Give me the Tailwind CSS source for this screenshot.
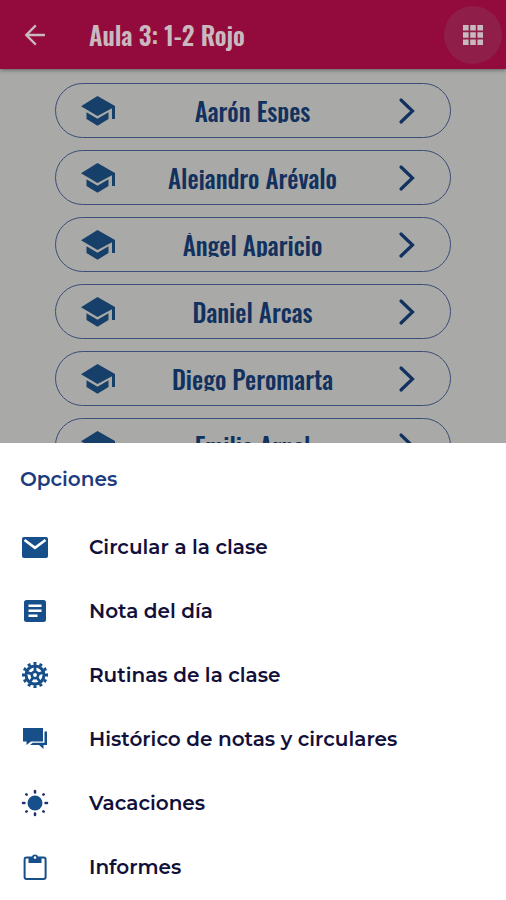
<!DOCTYPE html>
<html lang="es">
<head>
<meta charset="utf-8">
<meta name="viewport" content="width=device-width, initial-scale=1">
<title>Aula 3: 1-2 Rojo</title>
<script src="https://cdn.jsdelivr.net/npm/@tailwindcss/browser@4"></script>
</head>
<body class="bg-[#a9aaa7]">
<svg class="hidden" aria-hidden="true">
  <symbol id="cap" viewBox="0 0 34 30"><path fill="currentColor" d="M16.500 0 34 10v13h-3V12.200L16.500 20 0 10.200zM5.500 16.300l11 6.500 11-6.500V23l-11 6.700L5.500 23z"/></symbol>
  <symbol id="chevron" viewBox="0 0 18 28"><path fill="none" stroke="currentColor" stroke-width="3.200" stroke-linecap="round" stroke-linejoin="miter" d="M3 3 14.500 14 3 25"/></symbol>
</svg>
<div class="relative h-screen overflow-hidden font-['Oswald','Liberation_Sans_Narrow','Liberation_Sans',sans-serif]">
  <header class="flex h-[69px] items-center bg-[#930b3c] pr-1 pl-[21px] text-[#c9b9bf] shadow-[0_1px_4px_rgba(0,0,0,0.45)]">
    <button type="button" aria-label="Volver" class="flex size-7 items-center justify-center">
      <svg viewBox="0 0 24 24" class="size-7"><path fill="none" stroke="currentColor" stroke-width="2" d="M20.500 12H5M12.700 3.800 4.500 12l8.200 8.200"/></svg>
    </button>
    <h1 class="ml-10 flex-1 text-[25px] leading-9 font-semibold">Aula 3: 1-2 Rojo</h1>
    <button type="button" aria-label="Opciones" class="flex size-[58px] items-center justify-center rounded-full bg-[#8f1e48]">
      <svg viewBox="0 0 20 20" class="size-5" fill="currentColor"><path d="M0 0h5.600v5.600H0zM7.200 0h5.600v5.600H7.200zM14.400 0H20v5.600h-5.600zM0 7.200h5.600v5.600H0zM7.200 7.200h5.600v5.600H7.200zM14.400 7.200H20v5.600h-5.600zM0 14.400h5.600V20H0zM7.200 14.400h5.600V20H7.200zM14.400 14.400H20V20h-5.600z"/></svg>
    </button>
  </header>
  <main class="flex flex-col gap-3 px-[55px] pt-[14px] text-[#12315f]">
    <button type="button" class="flex h-[55px] items-center rounded-full border border-[#3c4d77] pr-[34px] pl-[25px]"><svg class="h-[30px] w-[34px] text-[#163f69]"><use href="#cap"/></svg><span class="h-6 flex-1 overflow-hidden pr-2 text-center text-[25px] leading-6 font-medium">Aarón Espes</span><svg class="h-7 w-[18px]"><use href="#chevron"/></svg></button>
    <button type="button" class="flex h-[55px] items-center rounded-full border border-[#3c4d77] pr-[34px] pl-[25px]"><svg class="h-[30px] w-[34px] text-[#163f69]"><use href="#cap"/></svg><span class="h-6 flex-1 overflow-hidden pr-2 text-center text-[25px] leading-6 font-medium">Alejandro Arévalo</span><svg class="h-7 w-[18px]"><use href="#chevron"/></svg></button>
    <button type="button" class="flex h-[55px] items-center rounded-full border border-[#3c4d77] pr-[34px] pl-[25px]"><svg class="h-[30px] w-[34px] text-[#163f69]"><use href="#cap"/></svg><span class="h-6 flex-1 overflow-hidden pr-2 text-center text-[25px] leading-6 font-medium">Ángel Aparicio</span><svg class="h-7 w-[18px]"><use href="#chevron"/></svg></button>
    <button type="button" class="flex h-[55px] items-center rounded-full border border-[#3c4d77] pr-[34px] pl-[25px]"><svg class="h-[30px] w-[34px] text-[#163f69]"><use href="#cap"/></svg><span class="h-6 flex-1 overflow-hidden pr-2 text-center text-[25px] leading-6 font-medium">Daniel Arcas</span><svg class="h-7 w-[18px]"><use href="#chevron"/></svg></button>
    <button type="button" class="flex h-[55px] items-center rounded-full border border-[#3c4d77] pr-[34px] pl-[25px]"><svg class="h-[30px] w-[34px] text-[#163f69]"><use href="#cap"/></svg><span class="h-6 flex-1 overflow-hidden pr-2 text-center text-[25px] leading-6 font-medium">Diego Peromarta</span><svg class="h-7 w-[18px]"><use href="#chevron"/></svg></button>
    <button type="button" class="flex h-[55px] items-center rounded-full border border-[#3c4d77] pr-[34px] pl-[25px]"><svg class="h-[30px] w-[34px] text-[#163f69]"><use href="#cap"/></svg><span class="h-6 flex-1 overflow-hidden pr-2 text-center text-[25px] leading-6 font-medium">Emilio Arnal</span><svg class="h-7 w-[18px]"><use href="#chevron"/></svg></button>
  </main>
  <section class="absolute inset-x-0 bottom-0 bg-white pb-px font-['Montserrat','Inter',sans-serif] text-[20px] font-semibold text-[#12103a]">
    <h2 class="flex h-[72px] items-center px-5 text-[#1d3c80]">Opciones</h2>
    <nav class="flex flex-col">
      <a href="#" class="flex h-16 items-center gap-10 px-5">
        <svg viewBox="0 0 29 29" class="size-[29px] text-[#174f8a]"><rect x="2" y="4" width="26" height="21" rx="2" fill="currentColor"/><path fill="none" stroke="#fff" stroke-width="2.600" d="M4.500 7 15 14.800 25.500 7"/></svg>Circular a la clase</a>
      <a href="#" class="flex h-16 items-center gap-10 px-5">
        <svg viewBox="0 0 29 29" class="size-[29px] text-[#174f8a]"><rect x="4" y="3" width="22" height="22" rx="2.500" fill="currentColor"/><path fill="none" stroke="#fff" stroke-width="2.500" d="M8.500 8.800h13M8.500 13.800h13M8.500 18.800h9"/></svg>Nota del día</a>
      <a href="#" class="flex h-16 items-center gap-10 px-5">
        <svg viewBox="0 0 29 29" class="size-[29px] text-[#174f8a]" fill="none" stroke="currentColor"><circle cx="15" cy="14" r="11.500" stroke-width="3" pathLength="120" stroke-dasharray="5 5" stroke-dashoffset="2.500"/><circle cx="15" cy="14" r="9" stroke-width="3"/><circle cx="15" cy="14" r="3.200" stroke-width="2.600"/><path stroke-width="2.800" d="M15 10.500v-5M18.300 12.900l4.800-1.500M17.100 16.800l2.900 4M12.900 16.800l-2.900 4M11.700 12.900l-4.800-1.500"/></svg>Rutinas de la clase</a>
      <a href="#" class="flex h-16 items-center gap-10 px-5">
        <svg viewBox="0 0 29 29" class="size-[29px] text-[#174f8a]"><path fill="currentColor" d="M3 3h20v13.500H11L6.500 20v-3.500H3zM24.500 6.500H27V20h-3.500v4L19 20h-9l2.800-2.300h11.700z"/></svg>Histórico de notas y circulares</a>
      <a href="#" class="flex h-16 items-center gap-10 px-5">
        <svg viewBox="0 0 29 29" class="size-[29px] text-[#174f8a]"><circle cx="15" cy="14" r="7.500" fill="currentColor"/><path fill="none" stroke="#25316f" stroke-width="2.600" stroke-linecap="round" d="M15 2v1.400M15 24.600V26M3 14h1.400M25.600 14H27M6.300 5.300l.4.400M23.300 22.300l.4.400M23.700 5.300l-.4.400M6.700 22.300l-.4.400"/></svg>Vacaciones</a>
      <a href="#" class="flex h-16 items-center gap-10 px-5">
        <svg viewBox="0 0 29 29" class="size-[29px] text-[#174f8a]"><rect x="4.600" y="4.600" width="21" height="21.500" rx="2" fill="none" stroke="currentColor" stroke-width="2"/><path fill="currentColor" d="M8.500 4h3.300a3.300 3.300 0 0 1 6.400 0h3.300v6h-13z"/><circle cx="15" cy="4.600" r="1.300" fill="#fff"/></svg>Informes</a>
    </nav>
  </section>
</div>
</body>
</html>
